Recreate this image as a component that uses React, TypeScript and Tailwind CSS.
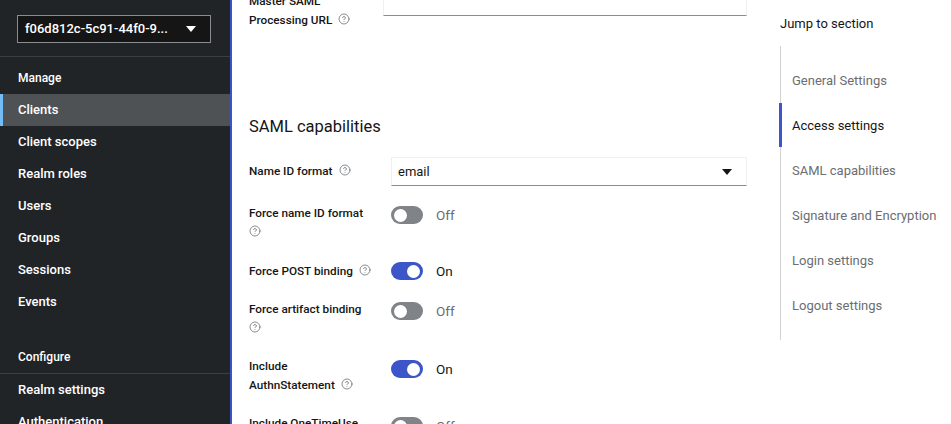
import { CircleHelp } from "lucide-react";

const font = { fontFamily: "Roboto, 'Liberation Sans', sans-serif" };

function Caret({ className }: { className: string }) {
  return (
    <svg width="10" height="6" viewBox="0 0 10 6" className={className}>
      <path d="M0 0h10L5 6z" fill="currentColor" />
    </svg>
  );
}

function Help({ gap = true }: { gap?: boolean }) {
  return (
    <CircleHelp
      size={12}
      strokeWidth={1.6}
      className={`inline-block align-[-1px] text-[#6a6e73] ${gap ? "ml-[6px]" : ""}`}
    />
  );
}

function Toggle({ on }: { on: boolean }) {
  return (
    <div className="flex items-center gap-[13px]">
      <div
        className={`flex h-[18px] w-[32px] items-center rounded-full px-[3px] ${
          on ? "justify-end bg-[#3c55c9]" : "justify-start bg-[#808387]"
        }`}
      >
        <div className="h-[13px] w-[13px] rounded-full bg-white" />
      </div>
      <span className={`text-[13.5px] leading-[18px] ${on ? "text-[#151515]" : "text-[#6a6e73]"}`}>
        {on ? "On" : "Off"}
      </span>
    </div>
  );
}

const manage = ["Clients", "Client scopes", "Realm roles", "Users", "Groups", "Sessions", "Events"];
const sections = [
  "General Settings",
  "Access settings",
  "SAML capabilities",
  "Signature and Encryption",
  "Login settings",
  "Logout settings",
];

function SwitchRow({
  lines,
  on,
  mt,
  toggleMt,
}: {
  lines: [string, string?];
  on: boolean;
  mt: string;
  toggleMt: string;
}) {
  return (
    <div className={`flex shrink-0 items-start ${mt}`}>
      <div className="w-[142px] text-[11.75px] font-medium leading-[19px] text-[#151515]">
        {lines[0]}
        {lines[1] === undefined ? (
          <Help />
        ) : (
          <>
            <br />
            {lines[1]}
            <Help gap={lines[1] !== ""} />
          </>
        )}
      </div>
      <div className={toggleMt}>
        <Toggle on={on} />
      </div>
    </div>
  );
}

export default function App() {
  return (
    <div className="flex h-[424px] w-[951px] overflow-hidden bg-white" style={font}>
      {/* sidebar */}
      <aside className="flex w-[232px] shrink-0 flex-col border-r-2 border-[#3b55c6] bg-[#212427] text-white">
        <div className="shrink-0 px-[17px] pt-[15px]">
          <div className="flex h-[28px] w-[194px] items-center justify-between border border-[#8a8d90] bg-[#151515] pl-[7px] pr-[14px]">
            <span className="text-[13px] font-medium">f06d812c-5c91-44f0-9...</span>
            <Caret className="text-white" />
          </div>
        </div>
        <div className="mt-[13px] shrink-0 border-t border-[#3c3f42]" />
        <div className="shrink-0 px-[18px] pb-[8px] pt-[13px] text-[12px] font-medium leading-[16px]">Manage</div>
        {manage.map((m, i) => (
          <div
            key={m}
            className={`flex h-[32px] shrink-0 items-center text-[13px] font-medium ${
              i === 0 ? "border-l-[3px] border-[#73bcf7] bg-[#4f5255] pl-[15px]" : "pl-[18px]"
            }`}
          >
            {m}
          </div>
        ))}
        <div className="shrink-0 px-[18px] pb-[8px] pt-[31px] text-[12px] font-medium leading-[16px]">Configure</div>
        <div className="shrink-0 border-t border-[#3c3f42]" />
        {["Realm settings", "Authentication"].map((m) => (
          <div key={m} className="flex h-[32px] shrink-0 items-center pl-[18px] text-[13px] font-medium">
            {m}
          </div>
        ))}
      </aside>

      {/* main form */}
      <main className="flex flex-1 flex-col pl-[17px] pr-[13px]">
        <div className="-mt-[20px] flex shrink-0 items-start">
          <div className="w-[134px] pt-[12px] text-[11.75px] font-medium leading-[19px] text-[#151515]">
            Master SAML
            <br />
            Processing URL
            <Help />
          </div>
          <div className="h-[36px] flex-1 border border-b-[#8a8d90] border-l-[#f0f0f0] border-r-[#f0f0f0] border-t-[#f0f0f0]" />
        </div>

        <h2 className="mt-[85px] shrink-0 text-[16.5px] leading-[24px] text-[#151515]">SAML capabilities</h2>

        <div className="mt-[18px] flex shrink-0 items-center">
          <div className="w-[142px] text-[11.75px] font-medium text-[#151515]">
            Name ID format
            <Help />
          </div>
          <div className="flex h-[29px] flex-1 items-center justify-between border border-b-[#8a8d90] border-l-[#f0f0f0] border-r-[#f0f0f0] border-t-[#f0f0f0] pl-[6px] pr-[14px]">
            <span className="text-[13px] text-[#151515]">email</span>
            <Caret className="text-[#151515]" />
          </div>
        </div>

        <SwitchRow lines={["Force name ID format", ""]} on={false} mt="mt-[18px]" toggleMt="mt-[2px]" />
        <SwitchRow lines={["Force POST binding"]} on mt="mt-[20px]" toggleMt="mt-[0px]" />
        <SwitchRow lines={["Force artifact binding", ""]} on={false} mt="mt-[19px]" toggleMt="mt-[2px]" />
        <SwitchRow lines={["Include", "AuthnStatement"]} on mt="mt-[19px]" toggleMt="mt-[3px]" />
        <SwitchRow lines={["Include OneTimeUse", "Condition"]} on={false} mt="mt-[19px]" toggleMt="mt-[3px]" />
      </main>

      {/* jump to section */}
      <nav className="w-[191px] shrink-0 pl-[20px]">
        <div className="pt-[15px] text-[13px] leading-[18px] text-[#151515]">Jump to section</div>
        <div className="mt-[13px] border-l border-[#d2d2d2] pb-[12px] pt-[12px]">
          {sections.map((s, i) => (
            <div
              key={s}
              className={`relative flex h-[45px] items-center pl-[11px] text-[13px] ${
                i === 1 ? "text-[#151515]" : "text-[#6a6e73]"
              }`}
            >
              {i === 1 && <div className="absolute -left-[2px] top-0 h-[44px] w-[3px] bg-[#3c55c9]" />}
              {s}
            </div>
          ))}
        </div>
      </nav>
    </div>
  );
}
